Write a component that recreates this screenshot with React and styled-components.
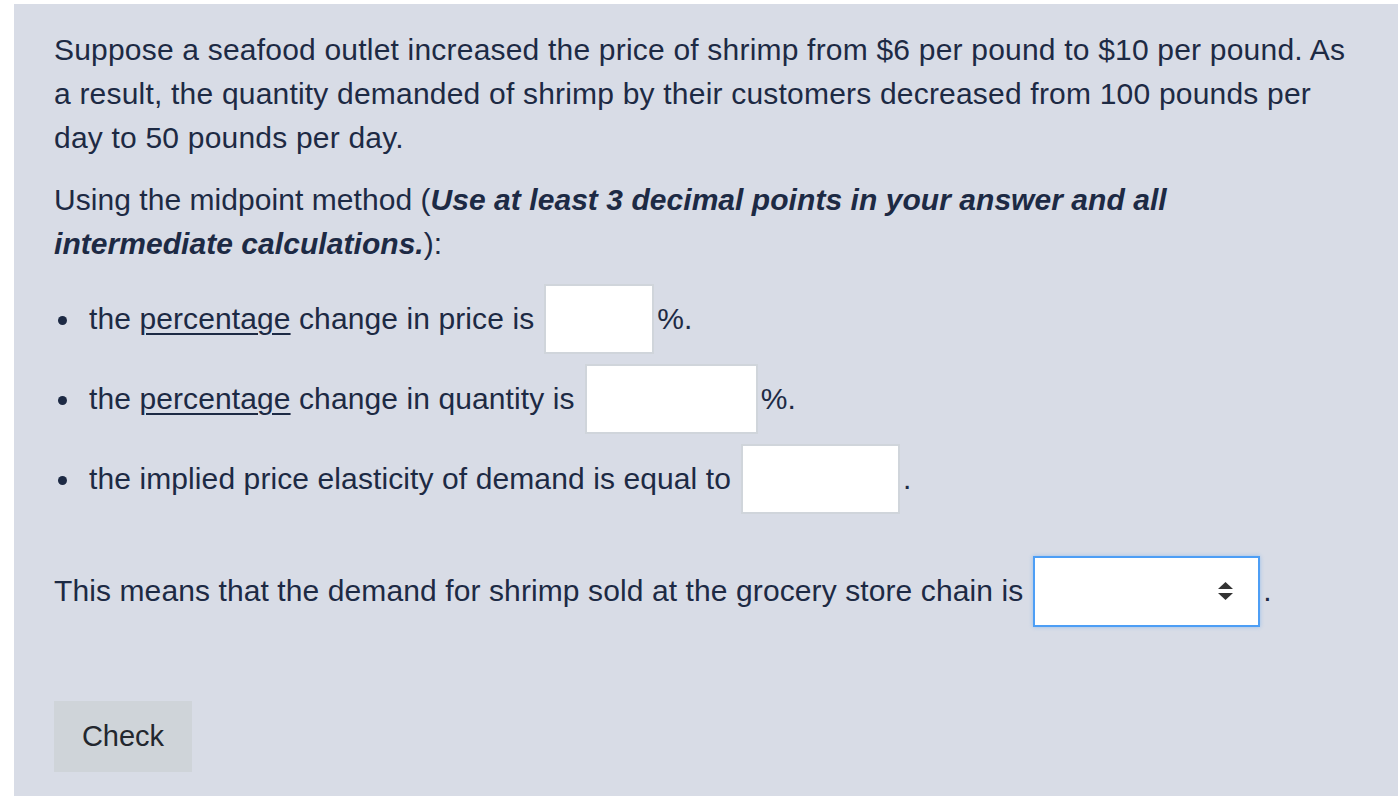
import React from "react";
import styled, { createGlobalStyle } from "styled-components";

const GlobalStyle = createGlobalStyle`
  html, body {
    margin: 0;
    padding: 0;
    background: #fff;
  }
  body {
    padding: 4px 0 2px 14px;
    font-family: "Liberation Sans", Arial, sans-serif;
  }
`;

const Panel = styled.div`
  background: #d8dce6;
  color: #1d2a44;
  font-size: 30px;
  letter-spacing: 0.1px;
  line-height: 44px;
  padding: 24px 40px 25px 40px;
  height: 792px;
  box-sizing: border-box;
`;

const Para = styled.p`
  margin: 0 0 18px 0;
  white-space: nowrap;
  letter-spacing: ${(p) => p.$spacing || 0.2}px;
`;

const List = styled.ul`
  list-style: none;
  margin: 16px 0 0 0;
  padding: 0;
  display: flex;
  flex-direction: column;
  gap: 10px;
`;

const Item = styled.li`
  display: flex;
  align-items: center;
  height: 70px;
  &::before {
    content: "";
    width: 9px;
    height: 9px;
    border-radius: 50%;
    background: #1d2a44;
    margin: 2px 22px 0 4px;
    flex-shrink: 0;
  }
`;

const Term = styled.span`
  text-decoration: underline;
  text-underline-offset: 4px;
  text-decoration-thickness: 2px;
`;

const Blank = styled.input`
  width: ${(p) => p.$w}px;
  height: 70px;
  box-sizing: border-box;
  border: 2px solid #d0d5db;
  background: #fff;
  margin: 0 3px 0 10px;
  padding: 0 8px;
  font: inherit;
  outline: none;
`;

const SentenceRow = styled.div`
  display: flex;
  align-items: center;
  height: 70px;
  margin-top: 42px;
`;

const Select = styled.div`
  width: 227px;
  height: 71px;
  box-sizing: border-box;
  border: 2px solid #4d9ef5;
  box-shadow: 0 0 4px rgba(77, 158, 245, 0.45);
  background: #fff;
  margin: 0 3px 0 10px;
  display: flex;
  align-items: center;
  justify-content: flex-end;
  padding-right: 24px;
`;

const Arrows = styled.svg`
  width: 17px;
  height: 22px;
`;

const CheckButton = styled.button`
  margin-top: 75px;
  width: 138px;
  height: 71px;
  border: 0;
  background: #cfd4d9;
  color: #23272e;
  font-family: inherit;
  font-size: 29px;
  cursor: pointer;
`;

export default function App() {
  return (
    <>
      <GlobalStyle />
      <Panel>
        <Para>
          Suppose a seafood outlet increased the price of shrimp from $6 per pound to $10 per pound. As
          <br />
          a result, the quantity demanded of shrimp by their customers decreased from 100 pounds per
          <br />
          day to 50 pounds per day.
        </Para>
        <Para $spacing={0.05}>
          Using the midpoint method (
          <b>
            <i>
              Use at least 3 decimal points in your answer and all
              <br />
              intermediate calculations.
            </i>
          </b>
          ):
        </Para>
        <List>
          <Item>
            the&nbsp;<Term>percentage</Term>&nbsp;change in price is
            <Blank $w={110} />%.
          </Item>
          <Item>
            the&nbsp;<Term>percentage</Term>&nbsp;change in quantity is
            <Blank $w={173} />%.
          </Item>
          <Item>
            the implied price elasticity of demand is equal to
            <Blank $w={159} />.
          </Item>
        </List>
        <SentenceRow>
          This means that the demand for shrimp sold at the grocery store chain is
          <Select>
            <Arrows viewBox="0 0 17 22">
              <path d="M8.5 2 L16 9 H1 Z" fill="#333" />
              <path d="M1 13 H16 L8.5 20 Z" fill="#333" />
            </Arrows>
          </Select>
          .
        </SentenceRow>
        <CheckButton>Check</CheckButton>
      </Panel>
    </>
  );
}
